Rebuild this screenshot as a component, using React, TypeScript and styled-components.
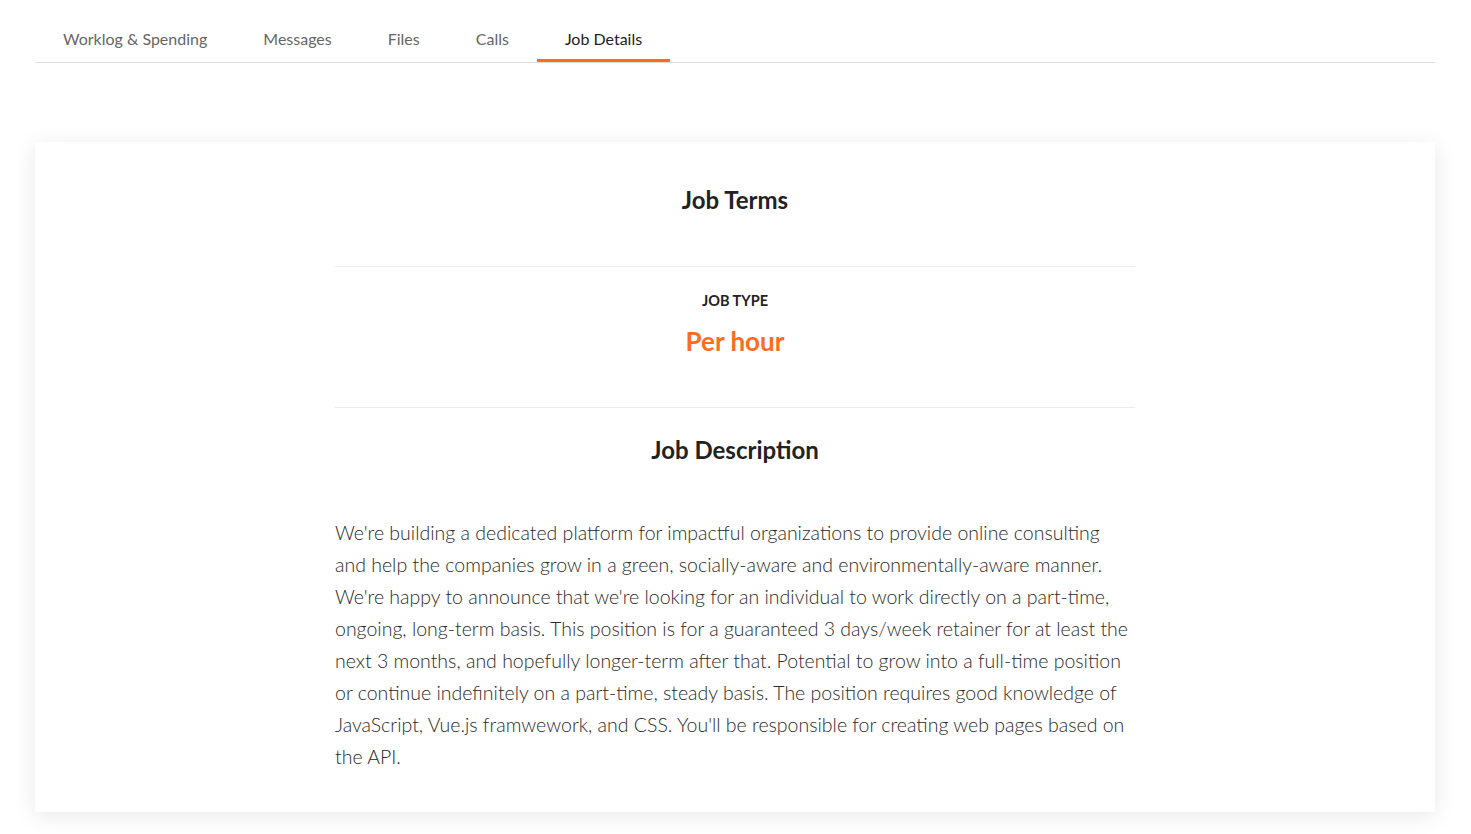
import React from "react";
import styled, { createGlobalStyle } from "styled-components";

const GlobalStyle = createGlobalStyle`
  body {
    margin: 0;
    background: #ffffff;
    font-family: Lato, "Open Sans", sans-serif;
    color: #222;
  }
`;

const orange = "#ff6c1f";

const Page = styled.div`
  padding: 16px 36px 22px 35px;
`;

const TabBar = styled.nav`
  display: flex;
  border-bottom: 1px solid #dcdcdc;
`;

const Tab = styled.div<{ $active?: boolean }>`
  height: 46px;
  box-sizing: border-box;
  display: flex;
  align-items: center;
  padding: 0 28px 2px;
  font-size: 16px;
  color: ${(p) => (p.$active ? "#222" : "#666")};
  box-shadow: ${(p) => (p.$active ? `inset 0 -3px 0 ${orange}` : "none")};
  cursor: pointer;
`;

const Card = styled.section`
  margin-top: 79px;
  background: #fff;
  box-shadow: 0 4px 22px rgba(0, 0, 0, 0.09);
  padding: 44px 0 39px;
  display: flex;
  justify-content: center;
`;

const Column = styled.div`
  width: 800px;
`;

const Heading = styled.h2<{ $gap: number }>`
  margin: 0 0 ${(p) => p.$gap}px;
  font-size: 24px;
  line-height: 28px;
  font-weight: 700;
  text-align: center;
  color: #222;
`;

const Divider = styled.hr`
  margin: 0;
  border: 0;
  border-top: 1px solid #ececec;
`;

const Term = styled.div`
  padding: 25px 0 51px;
  text-align: center;
`;

const TermLabel = styled.div`
  font-size: 14.5px;
  line-height: 17px;
  font-weight: 700;
  text-transform: uppercase;
  color: #222;
`;

const TermValue = styled.div`
  margin-top: 17px;
  font-size: 26px;
  line-height: 30px;
  font-weight: 700;
  color: ${orange};
`;

const DescriptionBlock = styled.div`
  padding-top: 28px;
`;

const Paragraph = styled.p`
  margin: 0;
  font-size: 19.5px;
  line-height: 32px;
  font-weight: 300;
  color: #2a2a2a;
`;

const tabs = ["Worklog & Spending", "Messages", "Files", "Calls", "Job Details"];

export default function App() {
  return (
    <>
      <GlobalStyle />
      <Page>
        <TabBar>
          {tabs.map((t) => (
            <Tab key={t} $active={t === "Job Details"}>
              {t}
            </Tab>
          ))}
        </TabBar>
        <Card>
          <Column>
            <Heading $gap={52}>Job Terms</Heading>
            <Divider />
            <Term>
              <TermLabel>Job type</TermLabel>
              <TermValue>Per hour</TermValue>
            </Term>
            <Divider />
            <DescriptionBlock>
              <Heading $gap={53}>Job Description</Heading>
              <Paragraph>
                We're building a dedicated platform for impactful organizations to provide online
                consulting and help the companies grow in a green, socially-aware and
                environmentally-aware manner. We're happy to announce that we're looking for an
                individual to work directly on a part-time, ongoing, long-term basis. This position
                is for a guaranteed 3 days/week retainer for at least the next 3 months, and
                hopefully longer-term after that. Potential to grow into a full-time position or
                continue indefinitely on a part-time, steady basis. The position requires good
                knowledge of JavaScript, Vue.js framwework, and CSS. You'll be responsible for
                creating web pages based on the API.
              </Paragraph>
            </DescriptionBlock>
          </Column>
        </Card>
      </Page>
    </>
  );
}
